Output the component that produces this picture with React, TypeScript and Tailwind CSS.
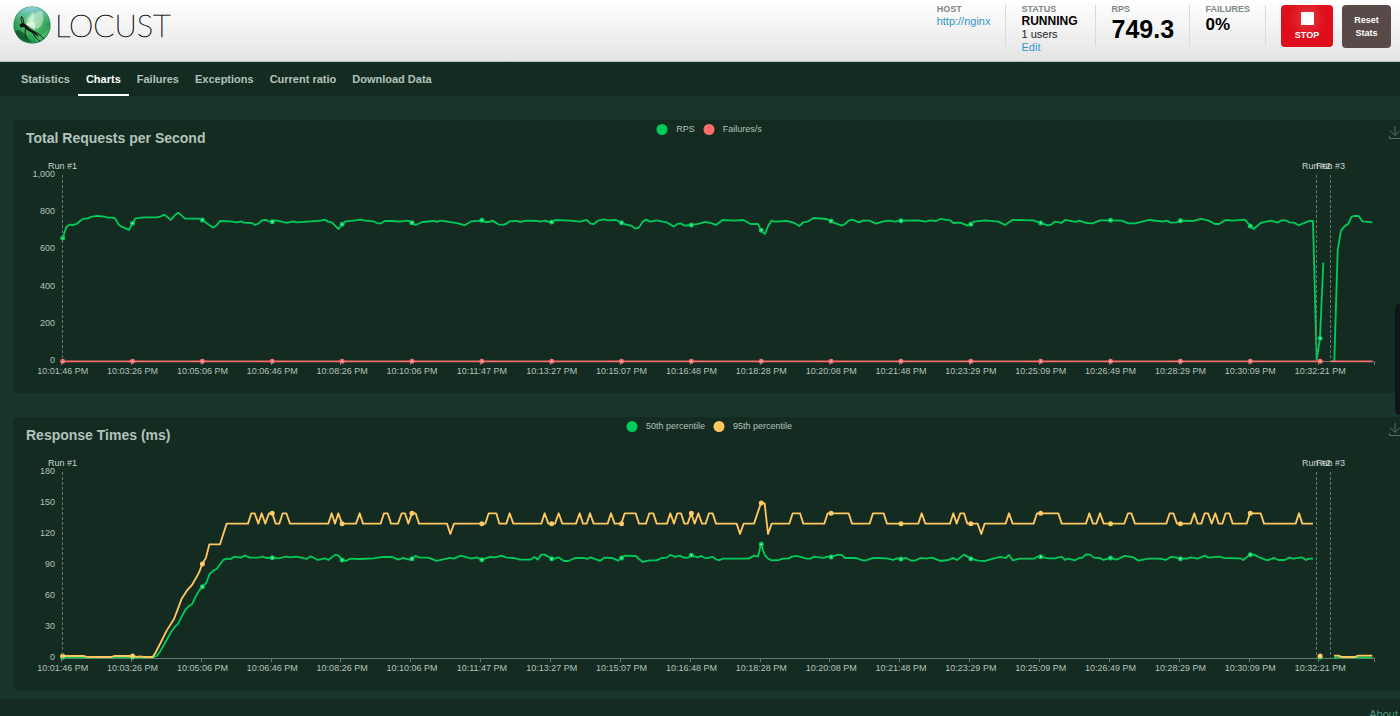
import React from 'react';
import clsx from 'clsx';

type Series = {
  name: string;
  color: string;
  fill: string;
  segments: string[];
  marks: number[];
};

type ChartProps = {
  title: string;
  zero: number;
  yLabels: string[];
  series: Series[];
};

const tabs = ['Statistics', 'Charts', 'Failures', 'Exceptions', 'Current ratio', 'Download Data'];

const times = [
  '10:01:46 PM', '10:03:26 PM', '10:05:06 PM', '10:06:46 PM', '10:08:26 PM', '10:10:06 PM', '10:11:47 PM',
  '10:13:27 PM', '10:15:07 PM', '10:16:48 PM', '10:18:28 PM', '10:20:08 PM', '10:21:48 PM', '10:23:29 PM',
  '10:25:09 PM', '10:26:49 PM', '10:28:29 PM', '10:30:09 PM', '10:32:21 PM',
];

const runs = [
  { name: 'Run #1', x: 49 },
  { name: 'Run #2', x: 1303 },
  { name: 'Run #3', x: 1317 },
];

const TICK = 69.86;
const PLOT_LEFT = 49.7;
const PLOT_TOP = 18;
const PLOT_BOTTOM = 204;

// traces are stored at three units per pixel
const rps: Series = {
  name: 'RPS',
  color: '#00ca5a',
  fill: '#c8f5da',
  segments: [
    `188,383 199,350 209,343 220,344 230,341 240,332 250,325 262,325 272,320 293,317 314,319 324,322 336,322 345,324
    356,343 366,350 387,359 397,339 407,324 430,321 471,321 483,318 493,313 513,329 524,315 535,307 555,325 597,325
    607,329 639,352 649,346 660,332 690,333 712,336 722,333 732,337 755,338 765,344 775,340 786,330 797,329 807,333
    817,334 827,330 860,338 880,333 890,336 932,333 962,331 974,328 984,334 995,336 1016,356 1026,342 1037,333
    1060,331 1082,328 1095,331 1120,333 1132,339 1143,339 1155,332 1175,332 1200,334 1222,331 1232,334 1236,338
    1247,344 1267,335 1300,332 1310,335 1322,331 1375,339 1394,345 1414,333 1445,331 1455,335 1467,335 1477,331
    1495,342 1508,344 1518,341 1529,333 1550,332 1561,335 1580,331 1610,332 1623,334 1635,331 1646,335 1656,335
    1666,329 1710,331 1740,334 1760,329 1772,340 1782,341 1794,331 1813,327 1824,330 1848,329 1864,337 1876,342
    1895,347 1906,355 1917,352 1928,334 1939,328 1950,334 1970,330 2000,336 2021,349 2032,341 2042,339 2053,346
    2074,344 2095,341 2115,335 2135,339 2148,344 2168,329 2200,331 2230,329 2252,341 2274,341 2283,360 2295,371
    2305,346 2315,331 2325,334 2360,332 2383,338 2398,347 2410,336 2425,333 2441,323 2480,326 2493,332 2503,338
    2525,346 2535,341 2546,331 2557,328 2577,336 2588,331 2608,331 2628,340 2650,333 2670,331 2685,334 2702,331
    2755,330 2777,334 2790,330 2808,332 2820,326 2850,330 2860,338 2882,337 2902,346 2912,342 2922,334 2955,330
    2995,334 3015,344 3037,329 3100,330 3121,338 3144,345 3154,343 3164,334 3184,338 3195,329 3227,335 3238,331
    3258,338 3278,339 3300,330 3331,330 3365,331 3385,339 3405,339 3448,329 3490,334 3500,331 3512,337 3530,336
    3541,331 3580,332 3604,326 3626,331 3645,341 3657,341 3677,329 3700,331 3732,328 3740,333 3750,347 3761,356
    3782,338 3813,331 3833,337 3845,330 3857,330 3868,336 3882,337 3896,345 3908,340 3928,332 3939,332 3950,750
    3960,684 3970,457`,
    '4003,752 4013,420 4023,361 4035,347 4045,340 4055,319 4065,317 4076,317 4087,333 4117,336',
  ],
  marks: [383, 339, 329, 334, 342, 337, 330, 335, 337, 344, 360, 332, 331, 342, 338, 330, 331, 347, 684],
};

const failures: Series = {
  name: 'Failures/s',
  color: '#ff6d6d',
  fill: '#ffe0e0',
  segments: ['188,753 3970,753', '3992,753 4117,753'],
  marks: Array(19).fill(753),
};

const p50: Series = {
  name: '50th percentile',
  color: '#00ca5a',
  fill: '#c8f5da',
  segments: [
    `188,742 458,742 470,738 480,725 500,690 515,663 525,650 534,642 545,620 556,600 566,589 576,583 587,560 597,543
    607,530 618,520 629,492 640,482 650,477 670,450 680,446 692,447 702,440 723,443 734,437 750,443 775,443 787,440
    800,444 817,443 835,445 858,440 870,442 890,440 920,447 932,439 954,450 975,445 985,450 1006,434 1016,437
    1026,450 1038,453 1050,446 1080,447 1120,445 1150,441 1175,441 1195,449 1210,444 1225,449 1236,446 1246,438
    1260,443 1285,443 1310,453 1350,444 1362,446 1382,437 1415,446 1430,442 1445,449 1470,441 1485,442 1505,437
    1520,443 1540,444 1560,449 1592,449 1603,441 1613,449 1624,434 1635,434 1654,446 1665,446 1675,442 1692,453
    1705,453 1725,444 1750,444 1762,447 1772,442 1800,453 1813,443 1835,444 1855,452 1864,444 1875,437 1907,438
    1928,456 1950,451 1970,451 1985,444 2000,443 2011,435 2025,441 2040,437 2052,443 2064,443 2074,436 2092,442
    2104,438 2117,445 2138,441 2148,448 2158,451 2168,446 2245,446 2263,437 2274,440 2283,403 2294,435 2304,446
    2315,451 2338,450 2348,446 2365,446 2375,440 2390,438 2420,446 2432,446 2442,440 2470,444 2483,440 2493,441
    2515,434 2525,435 2536,444 2567,444 2588,451 2598,451 2620,444 2660,445 2680,450 2690,445 2702,447 2718,444
    2734,452 2745,452 2762,444 2778,446 2797,443 2820,453 2845,450 2860,444 2871,450 2892,434 2902,440 2912,446
    2935,452 2955,453 3000,441 3017,444 3027,435 3038,451 3058,446 3104,446 3112,440 3121,440 3145,445 3165,445
    3185,440 3195,450 3205,446 3225,451 3238,444 3248,443 3258,433 3270,434 3282,443 3300,444 3310,450 3331,444
    3350,449 3373,438 3400,442 3415,452 3445,446 3480,446 3497,450 3515,440 3541,446 3562,446 3572,442 3593,446
    3615,437 3625,443 3658,440 3672,444 3720,445 3730,450 3750,434 3762,434 3782,444 3802,451 3823,444 3835,450
    3855,450 3867,443 3880,446 3905,442 3918,450 3928,446 3939,446`,
    '4002,742 4117,742',
  ],
  marks: [742, 742, 530, 443, 450, 446, 449, 446, 444, 436, 403, 441, 447, 446, 440, 444, 446, 434, 742],
};

const p95: Series = {
  name: '95th percentile',
  color: '#ffc760',
  fill: '#ffdf9e',
  segments: [
    `188,738 250,738 260,741 335,741 345,738 397,738 410,741 420,739 430,741 458,741 466,729 480,702 500,662 522,627
    532,601 545,566 560,543 576,525 597,488 607,462 618,443 628,403 660,403 680,341 744,341 754,310 764,310 775,341
    785,310 796,341 807,310 817,310 827,341 838,341 848,310 859,310 870,341 985,341 995,310 1005,341 1015,310
    1026,341 1068,341 1079,310 1089,341 1142,341 1152,310 1163,310 1173,341 1194,341 1205,310 1215,310 1225,341
    1236,310 1247,310 1257,341 1341,341 1351,372 1362,341 1456,341 1466,310 1489,310 1498,341 1519,341 1529,310
    1540,341 1624,341 1634,310 1645,341 1665,341 1676,310 1687,341 1728,341 1739,310 1749,341 1760,341 1770,310
    1781,341 1823,341 1833,310 1844,341 1864,341 1874,310 1907,310 1917,341 1938,341 1948,310 1960,310 1970,341
    2001,341 2011,310 2022,341 2032,310 2043,310 2053,341 2063,341 2074,310 2084,341 2095,310 2106,341 2117,341
    2127,310 2138,310 2148,341 2210,341 2220,372 2231,341 2262,341 2283,279 2294,280 2304,372 2315,341 2368,341
    2378,310 2400,310 2410,341 2473,341 2483,310 2546,310 2556,341 2609,341 2619,310 2651,310 2661,341 2755,341
    2765,310 2776,341 2850,341 2860,310 2870,341 2881,310 2892,310 2902,341 2933,341 2944,372 2954,341 3017,341
    3027,310 3038,341 3101,341 3111,310 3175,310 3185,341 3258,341 3268,310 3279,341 3289,341 3300,310 3311,341
    3373,341 3384,310 3394,310 3405,341 3499,341 3509,310 3520,310 3531,341 3572,341 3583,310 3593,341 3604,341
    3614,310 3624,310 3635,341 3646,310 3656,341 3667,341 3677,310 3688,310 3698,341 3740,341 3750,310 3782,310
    3792,341 3887,341 3897,310 3907,341 3939,341`,
    '4002,737 4015,737 4025,741 4065,741 4075,737 4117,737',
  ],
  marks: [738, 738, 462, 310, 341, 310, 341, 341, 341, 310, 279, 310, 341, 341, 310, 341, 341, 310, 738],
};

function Logo() {
  return (
    <a href="#" className="flex items-center gap-[4px] text-black">
      <svg viewBox="0 0 38 38" className="size-[38px]" aria-hidden="true">
        <defs>
          <radialGradient id="ball" cx="0.5" cy="0.42" r="0.58">
            <stop offset="0" stopColor="#8fdc8f" />
            <stop offset="0.5" stopColor="#3fae52" />
            <stop offset="0.85" stopColor="#1c8a42" />
            <stop offset="1" stopColor="#0d6a44" />
          </radialGradient>
          <linearGradient id="sky" x1="0" y1="0" x2="0" y2="1">
            <stop offset="0" stopColor="#8fd3e6" />
            <stop offset="0.45" stopColor="#5fbf9a" stopOpacity="0.2" />
            <stop offset="1" stopColor="#35c98c" stopOpacity="0.3" />
          </linearGradient>
        </defs>
        <circle cx="19" cy="19" r="18.6" fill="url(#ball)" />
        <circle cx="19" cy="19" r="18" fill="url(#sky)" />
        <path d="M2 25C8 21 13 31 19 36C11 36 4 32 2 25Z" fill="#0b4a1e" opacity="0.7" />
        <path d="M22 32C28 30 33 26 36 20C36 29 30 35 23 36Z" fill="#5fcf6c" opacity="0.5" />
        <path d="M15 19C16 11 22 5 29 5C32 12 30 20 24 23Z" fill="#dff5df" opacity="0.5" />
        <path d="M13 17C14 12 17 8 21 6C22 12 20 18 17 21Z" fill="#f4fff2" opacity="0.45" />
        <path d="M12.500 18L22 16L22 24Z" fill="#ffffff" opacity="0.6" />
        <path d="M6.500 18.500L10 16.500L12.500 18.500L17 22.500L23 26.500L26 31L21 28L14 24L11 21L7.500 21.500Z" fill="#101410" />
        <path d="M9.500 17.500L8 13L8.500 10M11 17.500L9.500 11M12.500 22L12 27L13.500 32M19 24.500L26 28L31 33M20 27.500L23 32L27 35.500" fill="none" stroke="#101410" strokeWidth="0.9" />
      </svg>
      <span className="font-[Lato,sans-serif] text-[31px] leading-none font-thin [-webkit-text-stroke:0.5px_black]">
        LOCUST
      </span>
    </a>
  );
}

function Stat({ label, className, children }: { label: string; className?: string; children: React.ReactNode }) {
  return (
    <div className={clsx('h-[41px] border-r border-[#dadada] px-[15px]', className)}>
      <div className="-mt-[1px] text-[9px] leading-[11px] font-bold text-[#7d8983]">{label}</div>
      {children}
    </div>
  );
}

function Chart({ title, zero, yLabels, series }: ChartProps) {
  return (
    <section className="-mr-[5px] ml-[13px] rounded-sm bg-[#132b21]">
      <div className="grid h-[37px] grid-cols-[1fr_auto_1fr] items-start">
        <h2 className="pt-[8px] pl-[13px] text-[14px] leading-[20px] font-bold text-[#b3c3bc]">{title}</h2>
        <ul className="flex gap-[8px] pt-[4px] text-[9px] leading-[11px] text-[#b3c3bc]">
          {series.map((s) => (
            <li key={s.name} className="flex items-start gap-[8px]">
              <svg viewBox="0 0 12 12" className="size-[12px]">
                <circle cx="6" cy="5.500" r="5.500" fill={s.color} />
              </svg>
              {s.name}
            </li>
          ))}
        </ul>
        <button type="button" aria-label="Save as image" className="mt-[6px] mr-[4px] justify-self-end">
          <svg viewBox="0 0 12 13" className="h-[13px] w-[12px]" fill="none" stroke="#5c6f66">
            <path d="M6 0V9M1 4.500L6 9.500L11 4.500M0.500 10V12.500H12" />
          </svg>
        </button>
      </div>

      <svg viewBox="0 0 1392 236" className="block h-auto w-full" fontSize="9" fill="#b3c3bc">
        {yLabels.map((label, i) => (
          <text key={label} x="42" y={PLOT_BOTTOM + 2 - (i * 186) / (yLabels.length - 1)} textAnchor="end">
            {label}
          </text>
        ))}

        <path d={`M48.500 ${PLOT_BOTTOM + 0.5}H1361.500V${PLOT_BOTTOM + 4}`} fill="none" stroke="#66786f" />
        {times.map((time, i) => (
          <g key={time}>
            <path d={`M${Math.round(48 + i * TICK) + 0.5} ${PLOT_BOTTOM}v4`} stroke="#66786f" />
            <text x={PLOT_LEFT + i * TICK} y="217" textAnchor="middle">
              {time}
            </text>
          </g>
        ))}

        <g transform={`translate(-13 ${PLOT_BOTTOM + 0.3 - zero / 3}) scale(0.33333)`}>
          {series.map((s) => (
            <g key={s.name} stroke={s.color} strokeLinejoin="round">
              {s.segments.map((points) => (
                <polyline key={points} points={points} fill="none" strokeWidth="5.500" />
              ))}
              {s.marks.map((y, i) => (
                <circle key={i} cx={188 + i * TICK * 3} cy={y} r="5" fill={s.fill} strokeWidth="5" />
              ))}
            </g>
          ))}
        </g>

        {runs.map((run) => (
          <g key={run.name}>
            <path d={`M${run.x + 0.5} ${PLOT_TOP}V${PLOT_BOTTOM}`} stroke="#66786f" strokeDasharray="3 2" />
            <text x={run.x + 0.5} y="12" textAnchor="middle" fill="#cbd5d0">
              {run.name}
            </text>
          </g>
        ))}
      </svg>
    </section>
  );
}

export default function App() {
  return (
    <div className="min-h-screen overflow-x-clip bg-[#17352b] font-['Liberation_Sans',Arial,sans-serif]">
      <header className="flex h-[62px] items-start justify-between border-b border-[#b9c7c0] bg-linear-to-b from-white to-[#e4e4e4] pr-[9px] pl-[13px]">
        <div className="pt-[6px]">
          <Logo />
        </div>

        <div className="flex pt-[5px] text-[11px] leading-[13px]">
          <Stat label="HOST">
            <a href="#" className="text-[#3296c8]">http://nginx</a>
          </Stat>
          <Stat label="STATUS" className="w-[90px]">
            <div className="text-[12px] font-bold text-black">RUNNING</div>
            <div className="text-[#222222]">1 users</div>
            <a href="#" className="block text-[#3296c8]">Edit</a>
          </Stat>
          <Stat label="RPS" className="w-[94px]">
            <div className="text-[25px] leading-[28px] font-bold text-black">749.3</div>
          </Stat>
          <Stat label="FAILURES">
            <div className="text-[17px] leading-[20px] font-bold text-black">0%</div>
          </Stat>

          <button
            type="button"
            className="ml-[15px] flex h-[42px] w-[52px] flex-col items-center gap-[4px] rounded bg-[#de0f1b] bg-radial-[at_50%_30%] from-[#e23540] to-[#de0f1b] to-50% pt-[7px] text-[9px] font-bold text-white"
          >
            <span className="size-[13px] bg-white" />
            STOP
          </button>
          <button
            type="button"
            className="ml-[9px] h-[43px] w-[49px] rounded bg-[#584a48] px-[8px] text-[9px] leading-[13px] font-bold text-white"
          >
            Reset Stats
          </button>
        </div>
      </header>

      <nav className="flex h-[34px] bg-[#132b21] pl-[13px] text-[11px] font-bold text-[#b3c3bc]">
        {tabs.map((tab) => (
          <a
            key={tab}
            href="#"
            className={clsx(
              'flex items-center border-b-2 px-[8px] pt-[2px]',
              tab === 'Charts' ? 'border-white text-white' : 'border-transparent',
            )}
          >
            {tab}
          </a>
        ))}
      </nav>

      <main className="relative flex flex-col gap-[24px] pt-[24px] pb-[9px]">
        <Chart
          title="Total Requests per Second"
          zero={753}
          yLabels={['0', '200', '400', '600', '800', '1,000']}
          series={[rps, failures]}
        />
        <Chart
          title="Response Times (ms)"
          zero={745}
          yLabels={['0', '30', '60', '90', '120', '150', '180']}
          series={[p50, p95]}
        />
        {/* side handle */}
        <div className="absolute top-[208px] right-0 h-[111px] w-[5px] rounded-l-lg bg-[#10131a]" />
      </main>

      <footer className="flex justify-end bg-[#132b21] px-[2px] pt-[8px] pb-[12px] text-[11px] leading-[14px]">
        <a href="#" className="text-[#4d9a7f]">About</a>
      </footer>
    </div>
  );
}
